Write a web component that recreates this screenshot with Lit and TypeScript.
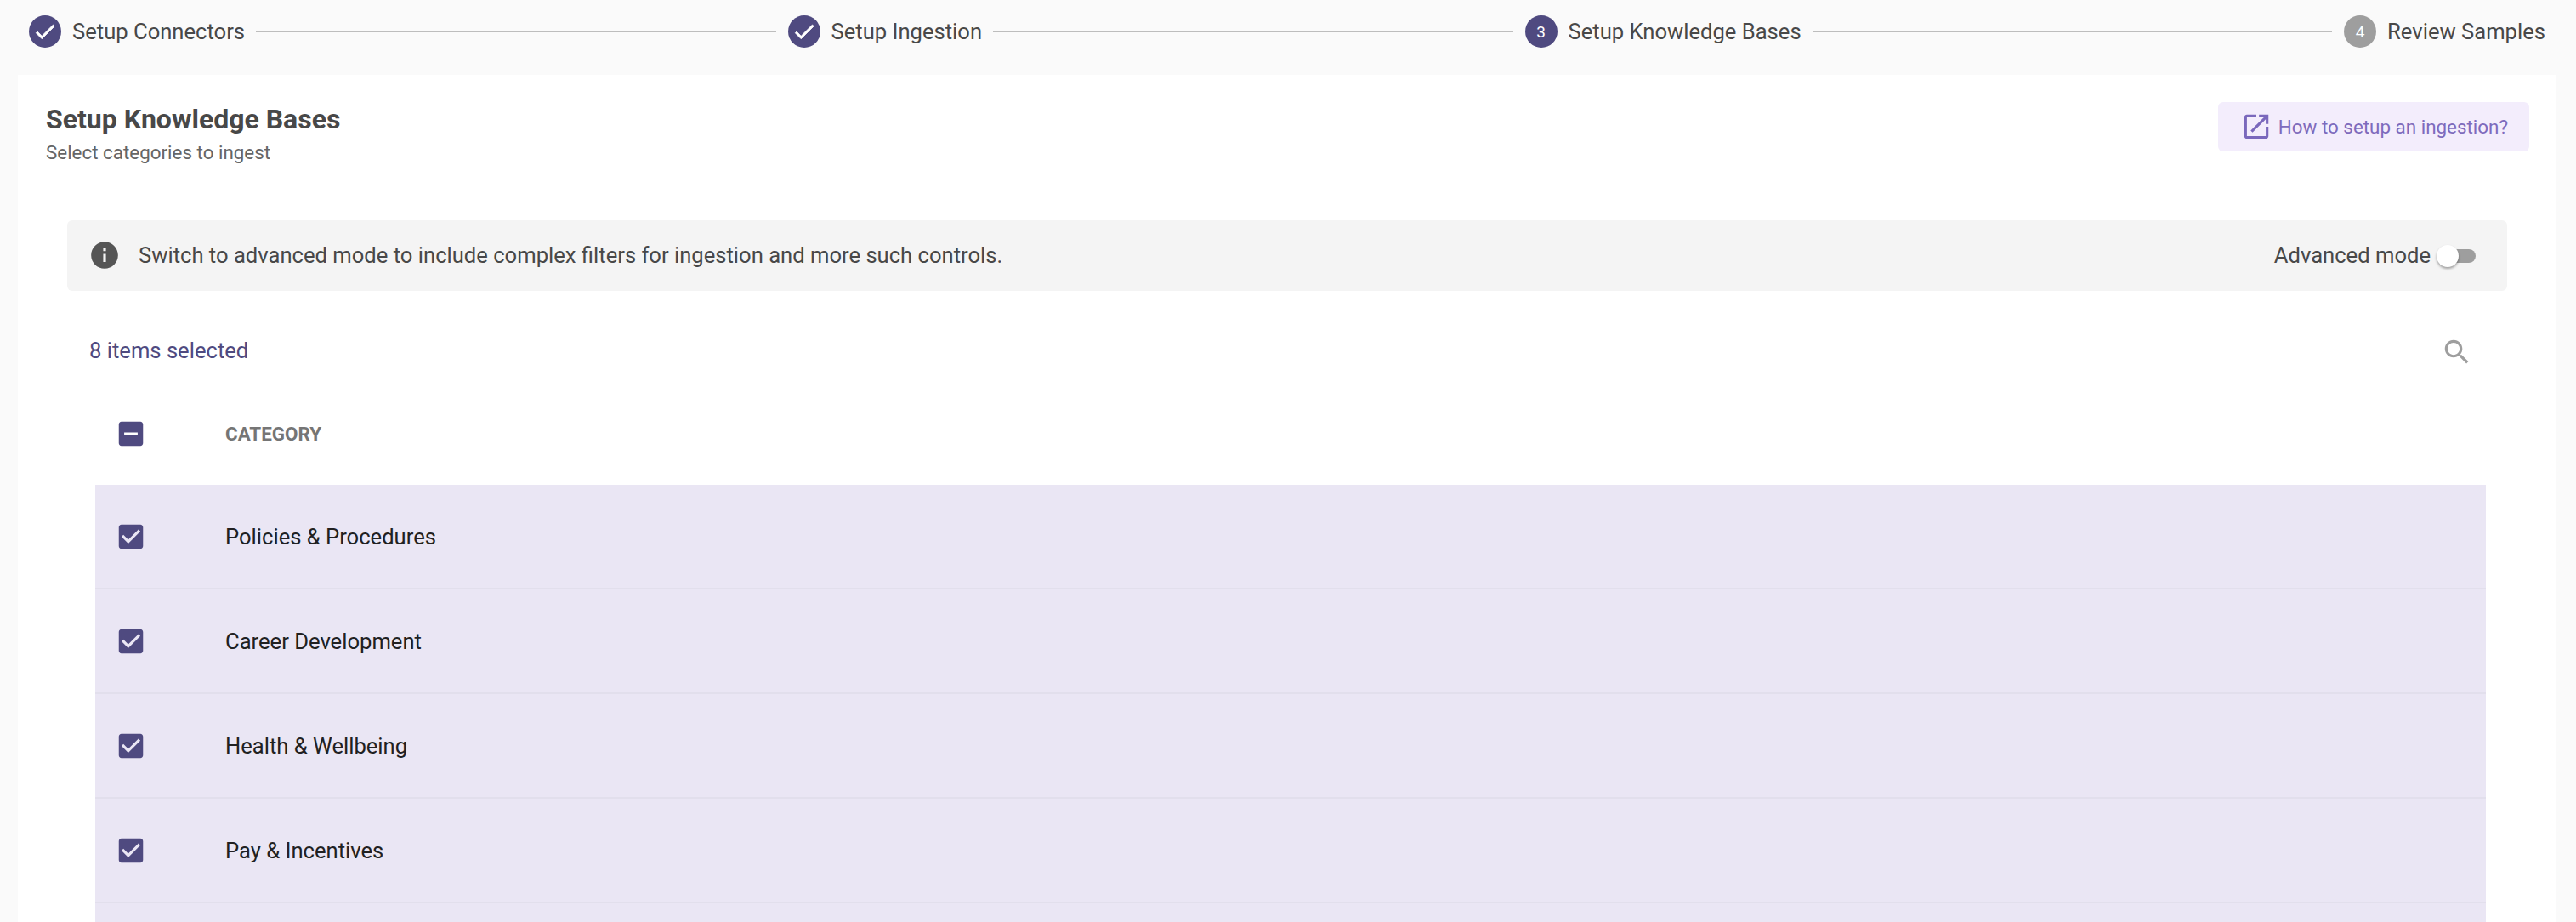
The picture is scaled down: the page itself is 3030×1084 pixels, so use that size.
import { LitElement, html, css, svg } from "lit";
import { customElement } from "lit/decorators.js";

const CHECK = "M9 16.17L4.83 12l-1.42 1.41L9 19 21 7l-1.41-1.41z";
const BOX_CHECKED = "M19 3H5c-1.11 0-2 .9-2 2v14c0 1.1.89 2 2 2h14c1.1 0 2-.9 2-2V5c0-1.11-.89-2-2-2zm-9 14l-5-5 1.41-1.41L10 14.17l7.59-7.59L19 8l-9 9z";
const BOX_INDET = "M19 3H5c-1.1 0-2 .9-2 2v14c0 1.1.9 2 2 2h14c1.1 0 2-.9 2-2V5c0-1.1-.9-2-2-2zm-2 10H7v-2h10v2z";
const OPEN = "M19 19H5V5h7V3H5c-1.11 0-2 .9-2 2v14c0 1.1.89 2 2 2h14c1.1 0 2-.9 2-2v-7h-2v7zM14 3v2h3.59l-9.83 9.83 1.41 1.41L19 6.41V10h2V3h-7z";
const INFO = "M12 2C6.48 2 2 6.48 2 12s4.48 10 10 10 10-4.48 10-10S17.52 2 12 2zm1 15h-2v-6h2v6zm0-8h-2V7h2v2z";
const SEARCH = "M15.5 14h-.79l-.28-.27C15.41 12.59 16 11.11 16 9.5 16 5.91 13.09 3 9.5 3S3 5.91 3 9.5 5.91 16 9.5 16c1.61 0 3.09-.59 4.23-1.57l.27.28v.79l5 4.99L20.49 19l-4.99-5zm-6 0C7.01 14 5 11.99 5 9.5S7.01 5 9.5 5 14 7.01 14 9.5 11.99 14 9.5 14z";

const icon = (d: string, cls: string) =>
  html`<svg class=${cls} viewBox="0 0 24 24" aria-hidden="true">${svg`<path d=${d}></path>`}</svg>`;

const STEPS = [
  { label: "Setup Connectors", state: "done", n: 1 },
  { label: "Setup Ingestion", state: "done", n: 2 },
  { label: "Setup Knowledge Bases", state: "active", n: 3 },
  { label: "Review Samples", state: "todo", n: 4 },
];
const ROWS = ["Policies & Procedures", "Career Development", "Health & Wellbeing", "Pay & Incentives", ""];

@customElement("app-root")
export class AppRoot extends LitElement {
  static styles = css`
    :host {
      display: block;
      height: 1084px;
      overflow: hidden;
      background: #fafafa;
      font-family: Roboto, "Liberation Sans", sans-serif;
      color: #424242;
    }
    .stepper {
      display: flex;
      align-items: center;
      height: 38px;
      padding: 18px 36px 32px 34px;
    }
    .step { display: flex; align-items: center; gap: 13px; }
    .dot {
      width: 38px;
      height: 38px;
      border-radius: 50%;
      background: #4f4a80;
      color: #fff;
      display: flex;
      align-items: center;
      justify-content: center;
      font-size: 19px;
    }
    .dot.todo { background: #9e9e9e; }
    .dot svg { width: 30px; height: 30px; fill: #fff; stroke: #fff; stroke-width: 0.6; }
    .step-label { font-size: 25.6px; line-height: 38px; color: #484848; white-space: nowrap; }
    .line { flex: 1; height: 2px; margin: -1px 14px 0 13px; background: #bdbdbd; }

    .card { margin: 0 23px 0 21px; background: #fff; height: 996px; overflow: hidden; }
    .head {
      display: flex;
      justify-content: space-between;
      align-items: flex-start;
      height: 141px;
      padding: 30px 32px 0 33px;
    }
    .title { font-size: 32px; font-weight: 700; line-height: 44px; color: #484848; }
    .sub { font-size: 22.4px; line-height: 34px; color: #666; }
    .guide {
      display: flex;
      align-items: center;
      gap: 7px;
      height: 58px;
      margin-top: 2px;
      padding: 0 25px 0 26px;
      border-radius: 6px;
      background: #f3edfc;
      color: #7e6bbd;
      font-size: 22.4px;
    }
    .guide svg { width: 38px; height: 38px; fill: #7a68bc; }
    .banner {
      display: flex;
      align-items: center;
      justify-content: space-between;
      height: 83px;
      margin: 0 58px;
      padding: 0 37px 0 25px;
      border-radius: 6px;
      background: #f4f4f4;
      font-size: 25.6px;
      color: #484848;
    }
    .banner-left, .banner-right { display: flex; align-items: center; }
    .banner-left { gap: 21px; }
    .banner-left svg { width: 38px; height: 38px; fill: #555; margin-top: -1px; }
    .banner-left span, .banner-right span { margin-top: -2px; }
    .banner-right { gap: 7px; }
    .switch { position: relative; width: 46px; height: 16px; }
    .track {
      width: 40px;
      height: 16px;
      margin-left: 6px;
      border-radius: 8px;
      background: #9e9e9e;
    }
    .thumb {
      position: absolute;
      left: 0;
      top: -5px;
      width: 26px;
      height: 26px;
      border-radius: 50%;
      background: #fff;
      box-shadow: 0 2px 3px rgba(0, 0, 0, 0.35);
    }
    .selected-row {
      display: flex;
      align-items: center;
      justify-content: space-between;
      height: 76px;
      margin-top: 32px;
      padding: 0 98px 0 84px;
    }
    .count { font-size: 25.6px; color: #4f4a80; }
    .search { width: 38px; height: 38px; fill: #9e9e9e; margin-top: 4px; }
    .table { margin: 0 83px 0 91px; }
    .row {
      display: grid;
      grid-template-columns: 153px 1fr;
      align-items: center;
      box-sizing: border-box;
      height: 123px;
    }
    .row.header { height: 120px; }
    .row.item {
      background: #eae6f4;
      border-bottom: 2px solid #e2dfec;
      font-size: 25.6px;
      color: #212121;
    }
    .row.item .box { margin-top: 1px; }
    .box { width: 38px; height: 38px; margin-left: 23px; fill: #4f4a80; display: block; }
    .col { font-size: 22.4px; font-weight: 700; color: #757575; }
  `;

  render() {
    return html`
      <div class="stepper">
        ${STEPS.map(
          (s, i) => html`
            ${i > 0 ? html`<div class="line"></div>` : ""}
            <div class="step">
              <div class="dot ${s.state}">${s.state === "done" ? icon(CHECK, "") : s.n}</div>
              <span class="step-label">${s.label}</span>
            </div>
          `
        )}
      </div>
      <div class="card">
        <div class="head">
          <div>
            <div class="title">Setup Knowledge Bases</div>
            <div class="sub">Select categories to ingest</div>
          </div>
          <div class="guide">${icon(OPEN, "")}<span>How to setup an ingestion?</span></div>
        </div>
        <div class="banner">
          <div class="banner-left">
            ${icon(INFO, "")}
            <span>Switch to advanced mode to include complex filters for ingestion and more such controls.</span>
          </div>
          <div class="banner-right">
            <span>Advanced mode</span>
            <div class="switch"><div class="track"></div><div class="thumb"></div></div>
          </div>
        </div>
        <div class="selected-row">
          <span class="count">8 items selected</span>
          ${icon(SEARCH, "search")}
        </div>
        <div class="table">
          <div class="row header">${icon(BOX_INDET, "box")}<span class="col">CATEGORY</span></div>
          ${ROWS.map(
            (r) => html`<div class="row item">${icon(BOX_CHECKED, "box")}<span>${r}</span></div>`
          )}
        </div>
      </div>
    `;
  }
}
